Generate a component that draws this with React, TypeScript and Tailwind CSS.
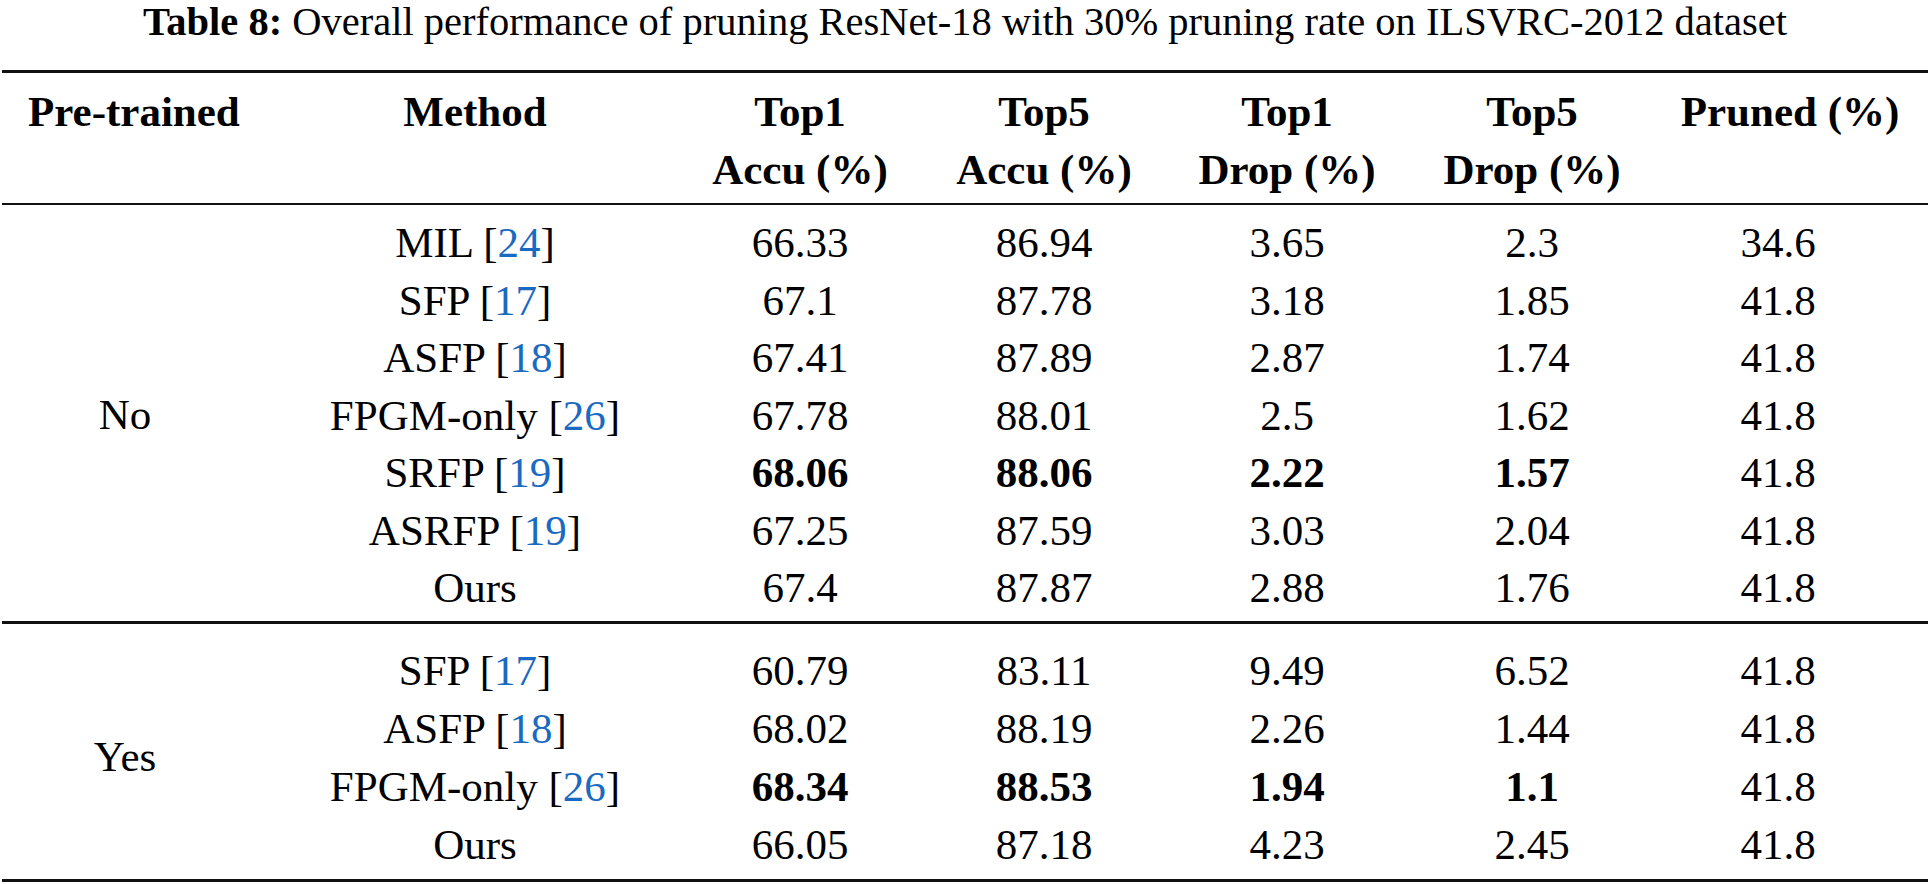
import React from "react";

type Row = {
  method: string;
  cite?: string;
  values: string[];
  bold?: boolean;
};

const sectionNo: Row[] = [
  { method: "MIL", cite: "24", values: ["66.33", "86.94", "3.65", "2.3", "34.6"] },
  { method: "SFP", cite: "17", values: ["67.1", "87.78", "3.18", "1.85", "41.8"] },
  { method: "ASFP", cite: "18", values: ["67.41", "87.89", "2.87", "1.74", "41.8"] },
  { method: "FPGM-only", cite: "26", values: ["67.78", "88.01", "2.5", "1.62", "41.8"] },
  { method: "SRFP", cite: "19", values: ["68.06", "88.06", "2.22", "1.57", "41.8"], bold: true },
  { method: "ASRFP", cite: "19", values: ["67.25", "87.59", "3.03", "2.04", "41.8"] },
  { method: "Ours", values: ["67.4", "87.87", "2.88", "1.76", "41.8"] },
];

const sectionYes: Row[] = [
  { method: "SFP", cite: "17", values: ["60.79", "83.11", "9.49", "6.52", "41.8"] },
  { method: "ASFP", cite: "18", values: ["68.02", "88.19", "2.26", "1.44", "41.8"] },
  { method: "FPGM-only", cite: "26", values: ["68.34", "88.53", "1.94", "1.1", "41.8"], bold: true },
  { method: "Ours", values: ["66.05", "87.18", "4.23", "2.45", "41.8"] },
];

// column widths after the first (pre-trained) column
const cols = "grid grid-cols-[450px_200px_288px_198px_292px_200px]";

const MethodCell = ({ row }: { row: Row }) => (
  <div className="text-center whitespace-nowrap">
    {row.method}
    {row.cite && (
      <>
        {" "}[<span className="text-[#1b6ac2]">{row.cite}</span>]
      </>
    )}
  </div>
);

const Section = ({ label, rows, rowClass }: { label: string; rows: Row[]; rowClass: string }) => (
  <div className="flex">
    <div className="w-[250px] flex items-center justify-center">{label}</div>
    <div className="flex flex-col">
      {rows.map((row, i) => (
        <div key={i} className={`${cols} ${rowClass}`}>
          <MethodCell row={row} />
          {row.values.map((v, j) => (
            <div
              key={j}
              className={`text-center whitespace-nowrap ${row.bold && j < 4 ? "font-bold" : ""}`}
            >
              {v}
            </div>
          ))}
        </div>
      ))}
    </div>
  </div>
);

export default function App() {
  return (
    <div className="w-[1930px] h-[884px] bg-white text-black font-['Liberation_Serif',serif] overflow-hidden">
      <div className="text-center text-[40.5px] leading-[44px] whitespace-nowrap">
        <span className="font-bold">Table 8:</span> Overall performance of pruning ResNet-18 with 30% pruning rate on ILSVRC-2012 dataset
      </div>

      <div className="mx-[2px] mt-[26px] h-[3px] bg-[#111]" />

      {/* header */}
      <div className="flex pt-[10px] text-[43px] leading-[57.5px] font-bold">
        <div className="w-[250px] pl-[28px] whitespace-nowrap">Pre-trained</div>
        <div className={cols}>
          <div className="text-center">Method</div>
          <div className="text-center whitespace-nowrap">
            <div>Top1</div>
            <div>Accu (%)</div>
          </div>
          <div className="text-center whitespace-nowrap">
            <div>Top5</div>
            <div>Accu (%)</div>
          </div>
          <div className="text-center whitespace-nowrap">
            <div>Top1</div>
            <div>Drop (%)</div>
          </div>
          <div className="text-center whitespace-nowrap">
            <div>Top5</div>
            <div>Drop (%)</div>
          </div>
          <div className="flex justify-center pl-[24px] whitespace-nowrap">Pruned (%)</div>
        </div>
      </div>

      <div className="mx-[2px] mt-[5px] h-[2px] bg-[#111]" />

      <div className="pt-[9px] text-[43px]">
        <Section label="No" rows={sectionNo} rowClass="leading-[57.5px]" />
      </div>

      <div className="mx-[2px] mt-[4px] h-[3px] bg-[#111]" />

      <div className="pt-[18px] text-[43px]">
        <Section label="Yes" rows={sectionYes} rowClass="leading-[58px]" />
      </div>

      <div className="mx-[2px] mt-[5px] h-[3px] bg-[#111]" />
    </div>
  );
}
